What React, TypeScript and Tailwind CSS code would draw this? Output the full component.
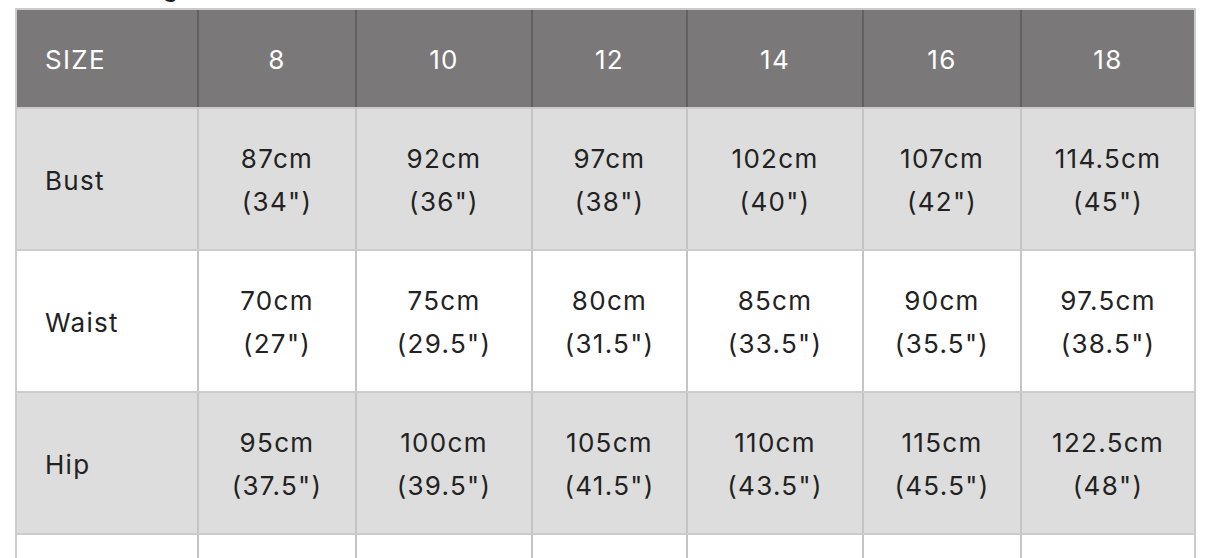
import React from 'react';

type Row = { label: string; values: [string, string][] };

const sizes = ['8', '10', '12', '14', '16', '18'];

const rows: Row[] = [
  {
    label: 'Bust',
    values: [['87cm', '(34")'], ['92cm', '(36")'], ['97cm', '(38")'], ['102cm', '(40")'], ['107cm', '(42")'], ['114.5cm', '(45")']],
  },
  {
    label: 'Waist',
    values: [['70cm', '(27")'], ['75cm', '(29.5")'], ['80cm', '(31.5")'], ['85cm', '(33.5")'], ['90cm', '(35.5")'], ['97.5cm', '(38.5")']],
  },
  {
    label: 'Hip',
    values: [['95cm', '(37.5")'], ['100cm', '(39.5")'], ['105cm', '(41.5")'], ['110cm', '(43.5")'], ['115cm', '(45.5")'], ['122.5cm', '(48")']],
  },
];

// column widths measured from the chart (cell widths, lines excluded)
const cols = 'grid grid-cols-[180px_156px_174px_153px_174px_156px_172px] gap-x-[2px]';

const App: React.FC = () => {
  return (
    <div className="w-[1214px] h-[558px] overflow-hidden bg-white font-['Inter','Liberation_Sans',sans-serif] text-[26px] tracking-[0.05em]">
      {/* heading above the chart, scrolled mostly out of view */}
      <div className="h-[8px] relative">
        <p className="absolute left-[97px] bottom-[6px] leading-[30px] text-[#1e1e1e] whitespace-nowrap">Sizing</p>
      </div>

      <div className="ml-[15px] w-[1181px] bg-[#cbcbcb] p-[2px] pb-0 flex flex-col gap-y-[2px]">
        {/* header */}
        <div className={`${cols} bg-[#626061]`}>
          <div className="h-[97px] bg-[#7b7879] text-white flex items-center pl-[28px] pt-[2px]">SIZE</div>
          {sizes.map((s) => (
            <div key={s} className="h-[97px] bg-[#7b7879] text-white flex items-center justify-center pt-[2px]">
              {s}
            </div>
          ))}
        </div>

        {rows.map((row, i) => {
          const bg = i % 2 === 0 ? 'bg-[#dddddd]' : 'bg-white';
          return (
            <div key={row.label} className={`${cols} bg-[#c4c4c4]`}>
              <div className={`h-[140px] ${bg} text-[#222222] flex items-center pl-[28px] pt-[2px]`}>{row.label}</div>
              {row.values.map(([cm, inch], j) => (
                <div key={j} className={`h-[140px] ${bg} text-[#222222] flex flex-col items-center justify-center leading-[43px] pt-[2px]`}>
                  <span>{cm}</span>
                  <span>{inch}</span>
                </div>
              ))}
            </div>
          );
        })}

        {/* next row, cut off by the window */}
        <div className={`${cols} bg-[#c4c4c4]`}>
          {[0, 1, 2, 3, 4, 5, 6].map((k) => (
            <div key={k} className="h-[140px] bg-white" />
          ))}
        </div>
      </div>
    </div>
  );
};

export default App;
